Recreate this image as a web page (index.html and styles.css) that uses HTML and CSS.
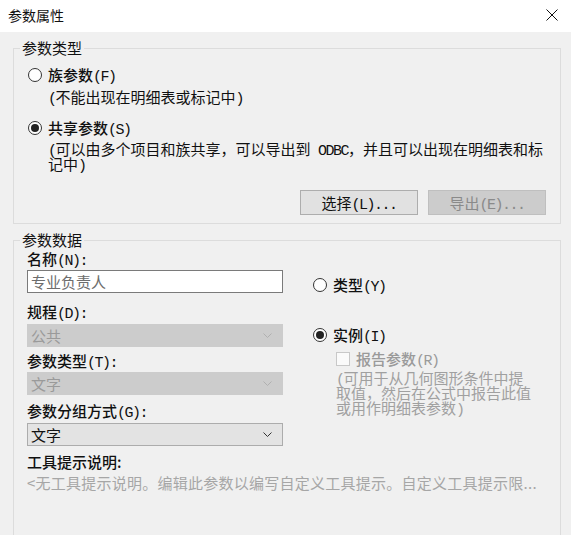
FILE: index.html
```html
<!DOCTYPE html>
<html lang="zh-CN">
<head>
    <meta charset="UTF-8">
    <title>参数属性</title>
    <link rel="stylesheet" href="styles.css">
</head>
<body>
    <div class="window">
        <div class="titlebar">
            <span class="title">参数属性</span>
            <svg class="close" width="12" height="12" viewBox="0 0 12 12">
                <path d="M0.5 0.5 L11.5 11.5 M11.5 0.5 L0.5 11.5" stroke="#111" stroke-width="1" fill="none"/>
            </svg>
        </div>

        <div class="content">
            <fieldset class="group group-type">
                <legend>参数类型</legend>

                <div class="option first">
                    <span class="radio"></span>
                    <span class="strong">族参数<span class="en">(F)</span></span>
                </div>
                <div class="hint hint-one"><span class="en">(</span>不能出现在明细表或标记中<span class="en">)</span></div>

                <div class="option second">
                    <span class="radio checked"></span>
                    <span class="strong">共享参数<span class="en">(S)</span></span>
                </div>
                <div class="hint hint-two"><span class="en">(</span>可以由多个项目和族共享，可以导出到<span class="en"> ODBC</span>，并且可以出现在明细表和标记中<span class="en">)</span></div>

                <div class="buttons">
                    <button class="btn">选择<span class="en">(L)...</span></button>
                    <button class="btn" disabled>导出<span class="en">(E)...</span></button>
                </div>
            </fieldset>

            <fieldset class="group group-data">
                <legend>参数数据</legend>

                <div class="columns">
                    <div class="fields">
                        <label class="label label-name">名称<span class="en">(N):</span></label>
                        <div class="textbox">专业负责人</div>

                        <label class="label label-disc">规程<span class="en">(D):</span></label>
                        <div class="select disabled">
                            <span>公共</span>
                            <svg class="chevron" width="9" height="5" viewBox="0 0 9 5"><path d="M0.5 0.5 L4.5 4.5 L8.5 0.5" stroke="currentColor" fill="none"/></svg>
                        </div>

                        <label class="label label-ptype">参数类型<span class="en">(T):</span></label>
                        <div class="select disabled">
                            <span>文字</span>
                            <svg class="chevron" width="9" height="5" viewBox="0 0 9 5"><path d="M0.5 0.5 L4.5 4.5 L8.5 0.5" stroke="currentColor" fill="none"/></svg>
                        </div>

                        <label class="label label-group">参数分组方式<span class="en">(G):</span></label>
                        <div class="select">
                            <span>文字</span>
                            <svg class="chevron" width="9" height="5" viewBox="0 0 9 5"><path d="M0.5 0.5 L4.5 4.5 L8.5 0.5" stroke="currentColor" fill="none"/></svg>
                        </div>
                    </div>

                    <div class="kind">
                        <div class="option kind-type">
                            <span class="radio"></span>
                            <span class="strong">类型<span class="en">(Y)</span></span>
                        </div>
                        <div class="option kind-inst">
                            <span class="radio checked"></span>
                            <span class="strong">实例<span class="en">(I)</span></span>
                        </div>
                        <div class="check">
                            <span class="checkbox"></span>
                            <span class="strong">报告参数<span class="en">(R)</span></span>
                        </div>
                        <div class="check-hint"><span class="en">(</span>可用于从几何图形条件中提取值，然后在公式中报告此值或用作明细表参数<span class="en">)</span></div>
                    </div>
                </div>

                <div class="label label-tip">工具提示说明:</div>
                <div class="tip">&lt;无工具提示说明。编辑此参数以编写自定义工具提示。自定义工具提示限...</div>
            </fieldset>
        </div>
    </div>
</body>
</html>
```

FILE: styles.css
```css
* {
    box-sizing: border-box;
}

body {
    margin: 0;
    width: 571px;
    height: 535px;
    overflow: hidden;
    font-family: "Noto Sans CJK SC", sans-serif;
    font-size: 15px;
    color: #111;
    background: #f0f0f0;
}

.en {
    font-family: "Liberation Mono", monospace;
    letter-spacing: -1.5px;
    line-height: 0;
}

.strong,
.label {
    font-weight: 500;
}

.window {
    display: flex;
    flex-direction: column;
    height: 100%;
}

.titlebar {
    flex-shrink: 0;
    height: 32px;
    background: #fff;
    display: flex;
    align-items: center;
    justify-content: space-between;
    padding: 0 13px 3px 8px;
}

.title {
    font-size: 14px;
    line-height: 18px;
}

.content {
    flex: 1;
    min-height: 0;
    overflow: hidden;
    padding: 0 10px 0 13px;
}

/* group boxes */
.group {
    margin: 7px 0 0 0;
    border: 1px solid #dcdcdc;
    padding: 0 14px 8px 14px;
    min-width: 0;
}

.group legend {
    line-height: 18px;
    padding: 0 2px;
    margin-left: -8px;
}

.group-data {
    height: 400px;
    padding-left: 13px;
}

.group-data legend {
    margin-left: -7px;
}

/* radio options */
.option {
    display: flex;
    align-items: center;
    gap: 6px;
    height: 20px;
    line-height: 20px;
}

.option.first {
    margin-top: 8px;
}

.option.second {
    margin-top: 12px;
}

.radio {
    width: 14px;
    height: 14px;
    border: 1px solid #333;
    border-radius: 50%;
    background: #fff;
    display: flex;
    align-items: center;
    justify-content: center;
    flex-shrink: 0;
}

.radio.checked::after {
    content: "";
    width: 8px;
    height: 8px;
    border-radius: 50%;
    background: #222;
}

.hint {
    padding-left: 20px;
    margin-top: 3px;
}

.hint-one {
    line-height: 18px;
}

.hint-two {
    line-height: 15px;
    padding-right: 2px;
}

.buttons {
    display: flex;
    justify-content: flex-end;
    gap: 10px;
    margin-top: 19px;
}

.btn {
    width: 118px;
    height: 25px;
    font: inherit;
    line-height: 20px;
    padding: 0;
    color: #111;
    background: #e1e1e1;
    border: 1px solid #adadad;
}

.btn:disabled {
    color: #8a8a8a;
    background: #cccccc;
    border-color: #bfbfbf;
}

/* data group */
.columns {
    display: grid;
    grid-template-columns: 256px 1fr;
    column-gap: 30px;
}

.fields {
    display: flex;
    flex-direction: column;
}

.label {
    display: block;
    line-height: 18px;
    margin-bottom: 2px;
}

.label-name {
    margin-top: 1px;
}

.label-disc {
    margin-top: 10px;
    margin-bottom: 3px;
}

.label-ptype {
    margin-top: 5px;
    margin-bottom: 2px;
}

.label-group {
    margin-top: 7px;
    margin-bottom: 3px;
}

.textbox {
    height: 23px;
    border: 1px solid #7a7a7a;
    background: #fff;
    color: #6d6d6d;
    padding: 0 3px;
    line-height: 21px;
}

.select {
    height: 23px;
    display: flex;
    align-items: center;
    justify-content: space-between;
    padding: 0 10px 0 3px;
    background: #e3e3e3;
    border: 1px solid #acacac;
    color: #111;
}

.select.disabled {
    background: #cccccc;
    border-color: #cccccc;
    color: #9a9a9a;
}

.chevron {
    color: #333;
}

.select.disabled .chevron {
    color: #b0b0b0;
}

.kind {
    display: flex;
    flex-direction: column;
    padding-top: 26px;
}

.kind-inst {
    margin-top: 30px;
}

.check {
    display: flex;
    align-items: center;
    gap: 6px;
    height: 18px;
    line-height: 18px;
    margin-top: 5px;
    padding-left: 23px;
    color: #9a9a9a;
}

.checkbox {
    width: 14px;
    height: 14px;
    border: 1px solid #c8c8c8;
    background: #fafafa;
}

.check-hint {
    margin-top: 2px;
    margin-left: 23px;
    width: 198px;
    line-height: 15px;
    color: #a0a0a0;
}

.label-tip {
    margin-top: 7px;
}

.tip {
    line-height: 18px;
    margin-top: 3px;
    color: #a6a6a6;
    white-space: nowrap;
    letter-spacing: 0.25px;
}
```
